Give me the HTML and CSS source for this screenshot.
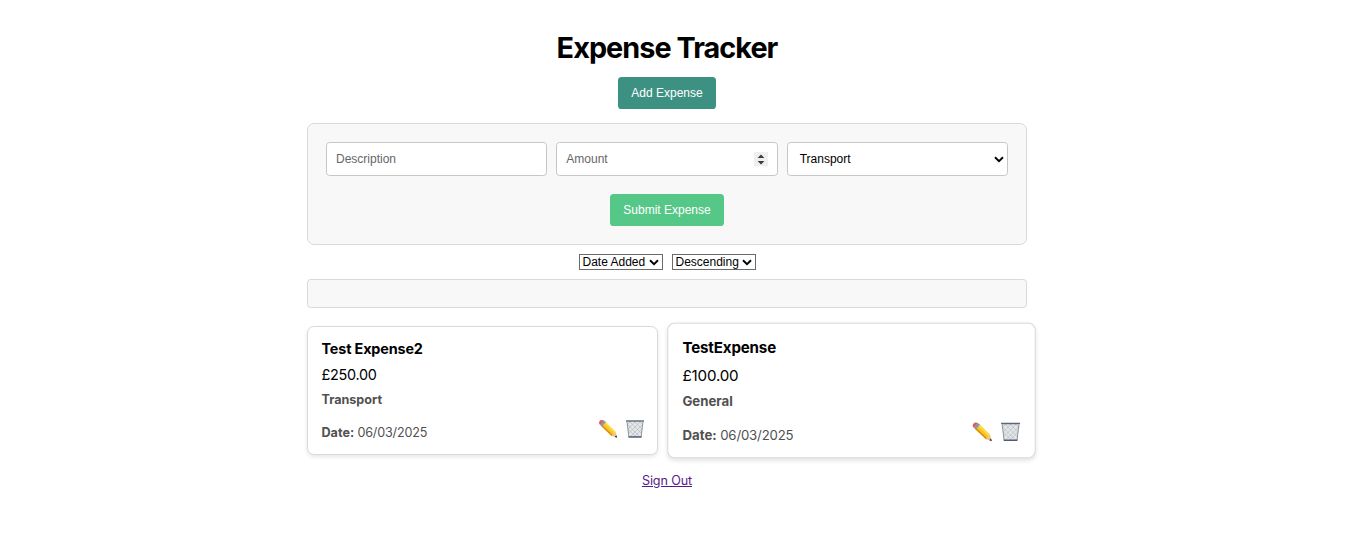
FILE: index.html
```
<!DOCTYPE html>
<html lang="en">
<head>
<meta charset="utf-8">
<title>Expense Tracker</title>
<link rel="stylesheet" href="styles.css">
</head>
<body>
<svg class="defs" width="0" height="0" aria-hidden="true">
  <defs>
    <symbol id="chevron" viewBox="0 0 10 7"><path d="M1 1.3 5 5.2 9 1.3" fill="none" stroke="#000" stroke-width="1.9"/></symbol>
    <symbol id="pencil" viewBox="0 0 20 20">
      <path d="M2.7 6.6 6.8 2.2 17.6 13 13.6 17Z" fill="#f8c624"/>
      <path d="M5.5 3.6 6.8 2.2 17.6 13 16.3 14.3Z" fill="#ffdc45"/>
      <path d="M2.7 6.6 3.7 5.5 14.6 16 13.6 17Z" fill="#d98b12"/>
      <path d="M13.6 17 17.6 13 19 18.6Z" fill="#e9c48e"/>
      <path d="M16.8 17.9 18.4 16.3 19.1 18.8Z" fill="#222"/>
      <path d="M2 5.8 6 1.5 7.8 3.2 3.8 7.5Z" fill="#7f9aaa"/>
      <path d="M2 5.9Q0 4.1 1.6 2.1T6 1.5L4.8 2.9 3.2 4.7Z" fill="#df5964"/>
    </symbol>
    <symbol id="bin" viewBox="0 0 20 20">
      <path d="M1.8 2.2H18.2L16.2 18.5H3.8Z" fill="#e4e7ea"/>
      <path d="M2 5 15 18M4 2 17 15M9 2 17 10M14 2 18 6M3 10 11 18M18 5 5 18M16 2 3 15M11 2 3 10M6 2 2 6M17 10 9 18" fill="none" stroke="#b0b5bb" stroke-width=".6"/>
      <path d="M2 3 3.9 18M18 3 16.1 18" fill="none" stroke="#858c96" stroke-width=".9"/>
      <path d="M1 1.3H19V2.7H1Z" fill="#5d6673"/>
      <path d="M3.5 17.2H16.5V18.7H3.5Z" fill="#4d5c70"/>
    </symbol>
  </defs>
</svg>
<main class="page">
  <h1 class="title">Expense Tracker</h1>
  <button class="button add">Add Expense</button>
  <form class="form">
    <div class="fields">
      <input class="field" type="text" placeholder="Description">
      <div class="field amount"><span>Amount</span>
        <svg class="spinner" viewBox="0 0 14 14"><path d="M0 0H14V14H0Z" fill="#efefef"/><path d="M3.6 6 7 2.4 10.4 6ZM3.6 9 7 12.4 10.4 9Z" fill="#3c3c3c"/></svg>
      </div>
      <div class="field category"><span>Transport</span><svg class="chevron"><use href="#chevron"/></svg></div>
    </div>
    <button class="button submit" type="button">Submit Expense</button>
  </form>
  <div class="sorting">
    <div class="sort"><span>Date Added</span><svg class="chevron"><use href="#chevron"/></svg></div>
    <div class="sort"><span>Descending</span><svg class="chevron"><use href="#chevron"/></svg></div>
  </div>
  <div class="summary"></div>
  <section class="cards">
    <article class="card">
      <h2 class="name">Test Expense2</h2>
      <p class="price">£250.00</p>
      <p class="type">Transport</p>
      <div class="foot"><p class="date"><b>Date:</b> 06/03/2025</p>
        <div class="actions"><svg class="icon"><use href="#pencil"/></svg><svg class="icon"><use href="#bin"/></svg></div></div>
    </article>
    <article class="card active">
      <h2 class="name">TestExpense</h2>
      <p class="price">£100.00</p>
      <p class="type">General</p>
      <div class="foot"><p class="date"><b>Date:</b> 06/03/2025</p>
        <div class="actions"><svg class="icon"><use href="#pencil"/></svg><svg class="icon"><use href="#bin"/></svg></div></div>
    </article>
  </section>
  <a class="signout" href="#">Sign Out</a>
</main>
</body>
</html>
```

FILE: styles.css
```
* { box-sizing: border-box; }
body { margin: 0; background: #fff; color: #000; font-family: Inter, sans-serif; }
.defs { display: block; }
.page { width: 720px; margin-left: 307px; padding-top: 30px; display: flex; flex-direction: column; align-items: center; }
.title { margin: 0 0 11px; font-size: 28.8px; line-height: 36px; font-weight: 700; letter-spacing: -0.95px; white-space: nowrap; }
.button { height: 32px; padding: 0; border: 0; border-radius: 3.6px; color: #fff; font: 12px "Liberation Sans", Arial, sans-serif; }
.add { width: 98px; background: #3d9183; }
.form { width: 720px; height: 122px; margin-top: 14px; padding: 18px; border: 1px solid #d9d9d9; border-radius: 7px; background: #f8f8f8; display: flex; flex-direction: column; align-items: center; gap: 18px; }
.fields { width: 100%; display: grid; grid-template-columns: repeat(3, 1fr); gap: 9px; }
.field { width: 100%; min-width: 0; height: 34px; padding: 0 9px; border: 1px solid #c6c6c6; border-radius: 3.6px; background: #fff; font: 12px "Liberation Sans", Arial, sans-serif; display: flex; align-items: center; justify-content: space-between; }
.field::placeholder { color: #666; opacity: 1; }
.amount { color: #666; }
.spinner { width: 14px; height: 14px; }
.category { padding: 0 3px 0 12px; }
.chevron { width: 10px; height: 7px; }
.submit { width: 114px; background: #55c787; }
.sorting { margin-top: 9px; display: flex; gap: 9px; }
.sort { width: 84px; height: 16px; padding: 0 3px; border: 1px solid #6b6b6b; font: 12px/14px "Liberation Sans", Arial, sans-serif; display: flex; align-items: center; justify-content: space-between; white-space: nowrap; }
.summary { width: 720px; height: 29px; margin-top: 9px; border: 1px solid #d9d9d9; border-radius: 3.6px; background: #f8f8f8; }
.cards { width: 720px; margin-top: 18px; display: grid; grid-template-columns: 1fr 1fr; gap: 18px; }
.card { height: 129px; padding: 13px 12.5px 13px 13.5px; border: 1px solid #dadada; border-radius: 7px; background: #fff; box-shadow: 0 2px 4px rgba(0,0,0,.1); }
.active { padding-top: 14px; padding-right: 13px; transform: scale(1.05); }
.name, .price, .type, .date { margin: 0; }
.name { font-size: 14.4px; line-height: 18px; font-weight: 700; letter-spacing: -0.15px; }
.price { margin-top: 8px; font-size: 14.4px; line-height: 18px; letter-spacing: -0.27px; }
.active .price { letter-spacing: -0.15px; }
.type { margin-top: 8px; font-size: 12.6px; line-height: 15px; font-weight: 700; color: #505050; }
.foot { margin-top: 11px; display: flex; justify-content: space-between; align-items: flex-start; }
.date { padding-top: 7px; font-size: 12.6px; line-height: 15px; letter-spacing: -0.18px; color: #505050; }
.date b { font-weight: 700; letter-spacing: 0; }
.actions { display: flex; gap: 7px; }
.icon { width: 20px; height: 20px; margin-top: 0.5px; }
.signout { margin-top: 18px; font-size: 12.6px; line-height: 16px; letter-spacing: -0.12px; color: #551a8b; }
```
